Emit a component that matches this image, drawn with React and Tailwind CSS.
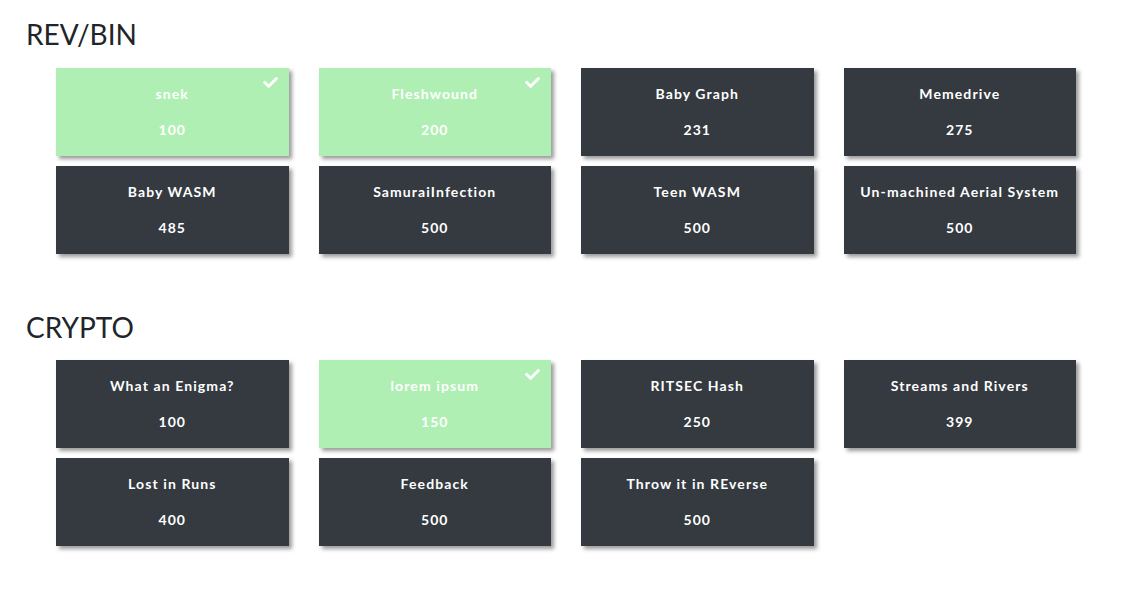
import React from "react";

const sections = [
  {
    title: "REV/BIN",
    items: [
      { name: "snek", value: 100, solved: true },
      { name: "Fleshwound", value: 200, solved: true },
      { name: "Baby Graph", value: 231 },
      { name: "Memedrive", value: 275 },
      { name: "Baby WASM", value: 485 },
      { name: "SamuraiInfection", value: 500 },
      { name: "Teen WASM", value: 500 },
      { name: "Un-machined Aerial System", value: 500 },
    ],
  },
  {
    title: "CRYPTO",
    items: [
      { name: "What an Enigma?", value: 100 },
      { name: "lorem ipsum", value: 150, solved: true },
      { name: "RITSEC Hash", value: 250 },
      { name: "Streams and Rivers", value: 399 },
      { name: "Lost in Runs", value: 400 },
      { name: "Feedback", value: 500 },
      { name: "Throw it in REverse", value: 500 },
    ],
  },
];

function Check() {
  return (
    <svg
      viewBox="0 0 512 512"
      className="absolute right-[11px] top-[7px] w-[15px] h-[15px]"
      fill="#ffffff"
    >
      <path d="M173.898 439.404l-166.4-166.4c-9.997-9.997-9.997-26.206 0-36.204l36.203-36.204c9.997-9.998 26.207-9.998 36.204 0L192 312.69 432.095 72.596c9.997-9.997 26.207-9.997 36.204 0l36.203 36.204c9.997 9.997 9.997 26.206 0 36.204l-294.4 294.401c-9.998 9.997-26.207 9.997-36.204-.001z" />
    </svg>
  );
}

function Card({ item }) {
  return (
    <div
      className={
        "relative h-[88px] flex flex-col items-center justify-center gap-[16px] shadow-[3px_3px_4px_rgba(0,0,0,0.4)] " +
        (item.solved ? "bg-[#b0efb3]" : "bg-[#343a40]")
      }
    >
      {item.solved && <Check />}
      <div className="text-[14px] leading-[20px] font-bold tracking-[1.1px] text-white">
        {item.name}
      </div>
      <div className="text-[14px] leading-[20px] font-bold tracking-[1.1px] text-white">
        {item.value}
      </div>
    </div>
  );
}

export default function App() {
  return (
    <div
      className="min-h-[594px] bg-white pt-[18px] pl-[26px]"
      style={{ fontFamily: "Lato, 'Noto Sans', sans-serif" }}
    >
      {sections.map((s, i) => (
        <div key={s.title} className={i > 0 ? "mt-[57px]" : ""}>
          <h3 className="text-[28px] leading-[1.2] font-normal text-[#212529]">
            {s.title}
          </h3>
          <div className="mt-[16px] ml-[30px] grid grid-cols-[repeat(4,232.5px)] gap-x-[30px] gap-y-[10px]">
            {s.items.map((it) => (
              <Card key={it.name} item={it} />
            ))}
          </div>
        </div>
      ))}
    </div>
  );
}
